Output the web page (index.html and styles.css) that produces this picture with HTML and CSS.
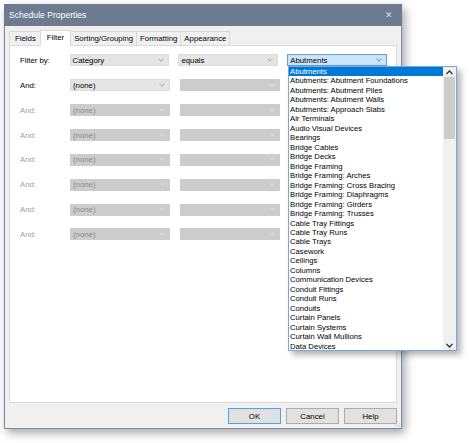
FILE: index.html
```
<!DOCTYPE html>
<html lang="en">
<head>
  <meta charset="UTF-8">
  <title>Schedule Properties</title>
  <link rel="stylesheet" href="styles.css">
</head>
<body>
  <div class="dialog">
    <div class="titlebar">
      <span class="title">Schedule Properties</span>
      <span class="close">&#x2715;</span>
    </div>

    <div class="tabs">
      <div class="tab">Fields</div>
      <div class="tab active">Filter</div>
      <div class="tab">Sorting/Grouping</div>
      <div class="tab">Formatting</div>
      <div class="tab">Appearance</div>
    </div>

    <div class="panel">
      <div class="row">
        <span class="label">Filter by:</span>
        <div class="combo"><span>Category</span><i class="chev"></i></div>
        <div class="combo"><span>equals</span><i class="chev"></i></div>
        <div class="combo focus"><span>Abutments</span><i class="chev"></i></div>
      </div>
      <div class="row">
        <span class="label">And:</span>
        <div class="combo"><span>(none)</span><i class="chev"></i></div>
        <div class="combo off"><span></span><i class="chev"></i></div>
      </div>
      <div class="row off">
        <span class="label">And:</span>
        <div class="combo off"><span>(none)</span><i class="chev"></i></div>
        <div class="combo off"><span></span><i class="chev"></i></div>
      </div>
      <div class="row off">
        <span class="label">And:</span>
        <div class="combo off"><span>(none)</span><i class="chev"></i></div>
        <div class="combo off"><span></span><i class="chev"></i></div>
      </div>
      <div class="row off">
        <span class="label">And:</span>
        <div class="combo off"><span>(none)</span><i class="chev"></i></div>
        <div class="combo off"><span></span><i class="chev"></i></div>
      </div>
      <div class="row off">
        <span class="label">And:</span>
        <div class="combo off"><span>(none)</span><i class="chev"></i></div>
        <div class="combo off"><span></span><i class="chev"></i></div>
      </div>
      <div class="row off">
        <span class="label">And:</span>
        <div class="combo off"><span>(none)</span><i class="chev"></i></div>
        <div class="combo off"><span></span><i class="chev"></i></div>
      </div>
      <div class="row off">
        <span class="label">And:</span>
        <div class="combo off"><span>(none)</span><i class="chev"></i></div>
        <div class="combo off"><span></span><i class="chev"></i></div>
      </div>
    </div>

    <div class="footer">
      <button class="btn default">OK</button>
      <button class="btn">Cancel</button>
      <button class="btn">Help</button>
      <span class="grip"></span>
    </div>
  </div>

  <!-- open category list, drawn over the dialog -->
  <div class="dropdown">
    <ul class="items">
      <li class="selected">Abutments</li>
      <li>Abutments: Abutment Foundations</li>
      <li>Abutments: Abutment Piles</li>
      <li>Abutments: Abutment Walls</li>
      <li>Abutments: Approach Slabs</li>
      <li>Air Terminals</li>
      <li>Audio Visual Devices</li>
      <li>Bearings</li>
      <li>Bridge Cables</li>
      <li>Bridge Decks</li>
      <li>Bridge Framing</li>
      <li>Bridge Framing: Arches</li>
      <li>Bridge Framing: Cross Bracing</li>
      <li>Bridge Framing: Diaphragms</li>
      <li>Bridge Framing: Girders</li>
      <li>Bridge Framing: Trusses</li>
      <li>Cable Tray Fittings</li>
      <li>Cable Tray Runs</li>
      <li>Cable Trays</li>
      <li>Casework</li>
      <li>Ceilings</li>
      <li>Columns</li>
      <li>Communication Devices</li>
      <li>Conduit Fittings</li>
      <li>Conduit Runs</li>
      <li>Conduits</li>
      <li>Curtain Panels</li>
      <li>Curtain Systems</li>
      <li>Curtain Wall Mullions</li>
      <li>Data Devices</li>
    </ul>
    <div class="scrollbar">
      <div class="arrow up">
        <svg width="7" height="5" viewBox="0 0 7 5"><path d="M0.5 4 L3.5 1 L6.5 4" fill="none" stroke="#333" stroke-width="1.3"/></svg>
      </div>
      <div class="thumb"></div>
      <div class="track"></div>
      <div class="arrow down">
        <svg width="7" height="5" viewBox="0 0 7 5"><path d="M0.5 1 L3.5 4 L6.5 1" fill="none" stroke="#333" stroke-width="1.3"/></svg>
      </div>
    </div>
  </div>
</body>
</html>
```

FILE: styles.css
```
body {
  margin: 0;
  background: #fff;
  font-family: "Liberation Sans", Arial, sans-serif;
  font-size: 7.8px;
  color: #000;
  position: relative;
  width: 469px;
  height: 443px;
  overflow: hidden;
}

.dialog {
  margin: 4px 0 0 4px;
  width: 398px;
  height: 425px;
  box-sizing: border-box;
  background: #f0f0f0;
  border: 1px solid #7d8ba1;
  border-top: none;
  box-shadow: 3px 4px 9px rgba(0, 0, 0, 0.35);
  display: flex;
  flex-direction: column;
}

.titlebar {
  height: 22px;
  margin: 0 -1px;
  background: #6c7b90;
  color: #fff;
  display: flex;
  align-items: center;
  justify-content: space-between;
  padding: 0 9px 0 5px;
}
.title {
  font-size: 8.6px;
}
.close {
  font-size: 9px;
  color: #d8dde5;
}

.tabs {
  display: flex;
  align-items: flex-end;
  height: 19px;
  padding-left: 4px;
}
.tab {
  height: 13px;
  line-height: 13px;
  padding: 0 3px;
  background: #f0f0f0;
  border: 1px solid #d9d9d9;
  border-bottom: none;
  margin-right: -1px;
}
.tab:first-child {
  padding: 0 4px 0 5px;
}
.tab.active {
  background: #fff;
  height: 15px;
  line-height: 13px;
  padding: 0 6px;
  position: relative;
  z-index: 1;
  margin-bottom: -1px;
}

.panel {
  margin: 0 4px 0 4px;
  height: 358px;
  background: #fff;
  border: 1px solid #d9d9d9;
  padding: 2px 0 0 10px;
  box-sizing: border-box;
}

.row {
  display: flex;
  align-items: center;
  height: 24.86px;
}
.label {
  width: 50px;
  color: #000;
}
.row.off .label {
  color: #a0a0a0;
}

.combo {
  width: 100px;
  height: 12px;
  box-sizing: border-box;
  background: #e5e5e5;
  border: 1px solid #dcdcdc;
  display: flex;
  align-items: center;
  justify-content: space-between;
  padding: 0 5px 0 2px;
  margin-right: 9.5px;
}
.combo.off {
  background: #cccccc;
  border-color: #cccccc;
  color: #8a8a8a;
}
.combo.focus {
  background: #cce4f7;
  border-color: #5ba2dc;
}
.chev {
  width: 3px;
  height: 3px;
  border-right: 1px solid #b8b8b8;
  border-bottom: 1px solid #b8b8b8;
  transform: rotate(45deg);
  margin-top: -3px;
}
.combo.off .chev {
  border-color: #dcdcdc;
}
.combo.focus .chev {
  border-color: #8aa0b8;
}

.footer {
  flex: 1;
  display: flex;
  align-items: center;
  justify-content: flex-end;
  gap: 5px;
  padding: 1px 4px 0 0;
  position: relative;
}
.btn {
  width: 53px;
  height: 16px;
  font-family: inherit;
  font-size: 7.8px;
  background: #e1e1e1;
  border: 1px solid #adadad;
  padding: 0;
  color: #000;
}
.btn.default {
  border-color: #5ba2dc;
  box-shadow: inset 0 0 0 1px #cde3f5;
}
.grip {
  position: absolute;
  right: 1px;
  bottom: 1px;
  width: 6px;
  height: 6px;
  background: repeating-linear-gradient(135deg, transparent 0 1px, #c8c8c8 1px 2px);
  opacity: 0.6;
}

.dropdown {
  position: absolute;
  left: 288px;
  top: 66px;
  width: 169px;
  height: 285px;
  box-sizing: border-box;
  background: #fff;
  border: 1px solid #7aa7d8;
  box-shadow: 4px 4px 6px rgba(0, 0, 0, 0.3);
  display: flex;
}
.items {
  list-style: none;
  margin: 0;
  padding: 0;
  flex: 1;
  font-size: 7.7px;
}
.items li {
  height: 9.48px;
  line-height: 9.48px;
  padding-left: 1px;
  white-space: nowrap;
}
.items li.selected {
  background: #0078d7;
  color: #fff;
}

.scrollbar {
  width: 13px;
  background: #f0f0f0;
  display: flex;
  flex-direction: column;
}
.arrow {
  height: 10px;
  display: flex;
  align-items: center;
  justify-content: center;
}
.thumb {
  height: 62px;
  background: #cdcdcd;
  margin: 0 1px;
}
.track {
  flex: 1;
}
```
